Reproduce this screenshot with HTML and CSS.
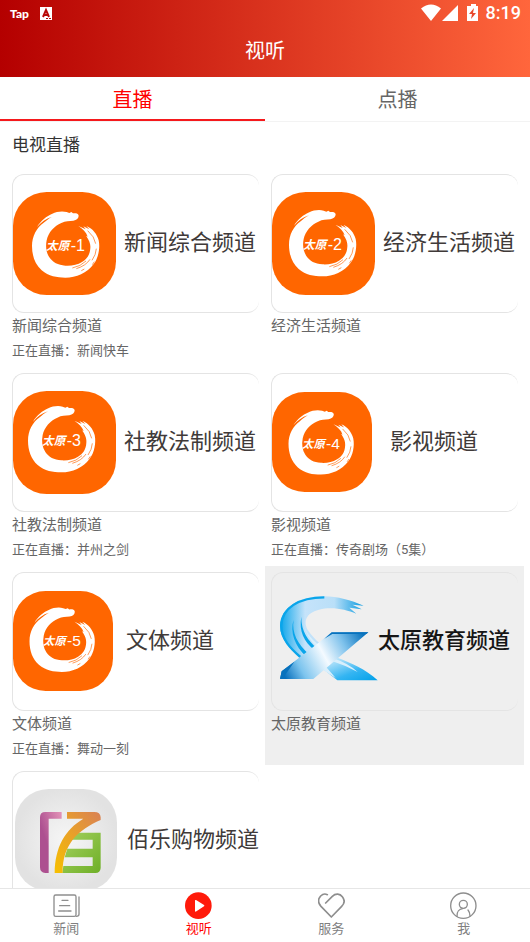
FILE: index.html
```html
<!DOCTYPE html>
<html lang="zh-CN">
<head>
    <meta charset="UTF-8">
    <meta name="viewport" content="width=device-width, initial-scale=1.0">
    <title>视听</title>
    <link rel="stylesheet" href="styles.css">
</head>
<body>
    <!-- Shared brush ring of the Taiyuan channels -->
    <svg class="defs" width="0" height="0" aria-hidden="true">
        <defs>
            <symbol id="ring" viewBox="0 0 309 309">
                <path fill="#fff" d="M197 71C196 64 188 63 180 64L175 60L169 63L161 60C147 56 130 59 118 65C101 72 83 86 72 105C84 91 99 79 117 74C106 80 98 87 92 92C71 107 57 132 57 162C57 191 66 217 86 235C107 253 132 257 157 257C190 257 222 243 242 216C256 199 262 168 257 145C252 127 240 110 220 102L229 112L211 103L218 112L196 102C209 111 220 121 224 134L219 131C230 146 233 158 232 168C231 188 222 201 207 210C193 219 176 222 157 221C135 220 119 211 109 196C100 182 97 165 101 145C106 121 124 102 145 93C158 86 169 88 181 86C191 84 197 79 197 71Z"/>
                <path fill="none" stroke="#ff6600" stroke-width="2" d="M178 228Q203 223 219 207M190 230Q219 221 231 202M237 205Q249 188 250 170M224 116Q245 134 248 155M205 236L214 231M238 218L244 209"/>
                <text class="ring-name" x="99" y="174">太原</text>
            </symbol>
        </defs>
    </svg>

    <header class="header">
        <div class="status">
            <span class="status-tap">Tap</span>
            <svg class="status-a" viewBox="0 0 12 13" width="12" height="13" aria-hidden="true">
                <path fill="#fff" d="M0 0h12v13H0z"/>
                <path fill="none" stroke="#b80a08" stroke-width="2" d="M3 10L6 3L9 10M4 8h4"/>
                <path fill="#b80a08" d="M6 11h2v1H6zM9 11h2v1H9z"/>
            </svg>
            <div class="status-right">
                <svg viewBox="0 0 58 18" width="58" height="18" aria-hidden="true">
                    <path fill="#fff" d="M0 4.500Q10-3.500 20 4.500L10 17zM37 1v16H21zM47 2h3V0h5v2h2v15H46V2z"/>
                    <path fill="#e8492d" d="M53 4l-5 6h3l-1 5 5-6h-3z"/>
                </svg>
                <span class="clock">8:19</span>
            </div>
        </div>
        <h1 class="title">视听</h1>
    </header>

    <nav class="tabs">
        <button class="tab active" type="button">直播</button>
        <button class="tab" type="button">点播</button>
    </nav>

    <main class="content">
        <h2 class="section-title">电视直播</h2>
        <div class="channels">
            <a class="channel" href="#">
                <div class="banner">
                    <svg class="logo" viewBox="0 0 309 309" aria-hidden="true">
                        <rect width="309" height="309" rx="101" fill="#ff6600"/>
                        <use href="#ring" width="309" height="309"/>
                        <text class="ring-number" x="173" y="178">-1</text>
                    </svg>
                    <span class="banner-text">新闻综合频道</span>
                </div>
                <h3 class="name">新闻综合频道</h3>
                <p class="playing">正在直播：新闻快车</p>
            </a>
            <a class="channel" href="#">
                <div class="banner">
                    <svg class="logo" viewBox="0 0 309 309" aria-hidden="true">
                        <rect width="309" height="309" rx="101" fill="#ff6600"/>
                        <use href="#ring" x="-6" y="-4" width="309" height="309"/>
                        <text class="ring-number" x="167" y="174">-2</text>
                    </svg>
                    <span class="banner-text">经济生活频道</span>
                </div>
                <h3 class="name">经济生活频道</h3>
            </a>
            <a class="channel" href="#">
                <div class="banner">
                    <svg class="logo" viewBox="0 0 309 309" aria-hidden="true">
                        <rect width="309" height="309" rx="101" fill="#ff6600"/>
                        <use href="#ring" x="-12" y="-13" width="309" height="309"/>
                        <text class="ring-number" x="161" y="165">-3</text>
                    </svg>
                    <span class="banner-text">社教法制频道</span>
                </div>
                <h3 class="name">社教法制频道</h3>
                <p class="playing">正在直播：并州之剑</p>
            </a>
            <a class="channel" href="#">
                <div class="banner banner-movie">
                    <svg class="logo" viewBox="0 0 309 309" aria-hidden="true">
                        <rect width="309" height="309" rx="101" fill="#ff6600"/>
                        <use href="#ring" x="-6" y="-2" width="309" height="309"/>
                        <text class="ring-number" x="167" y="176">-4</text>
                    </svg>
                    <span class="banner-text">影视频道</span>
                </div>
                <h3 class="name">影视频道</h3>
                <p class="playing">正在直播：传奇剧场（5集）</p>
            </a>
            <a class="channel" href="#">
                <div class="banner banner-sport">
                    <svg class="logo" viewBox="0 0 309 309" aria-hidden="true">
                        <rect width="309" height="309" rx="101" fill="#ff6600"/>
                        <use href="#ring" x="-6" y="-7" width="309" height="309"/>
                        <text class="ring-number" x="167" y="171">-5</text>
                    </svg>
                    <span class="banner-text">文体频道</span>
                </div>
                <h3 class="name">文体频道</h3>
                <p class="playing">正在直播：舞动一刻</p>
            </a>
            <a class="channel pressed" href="#">
                <div class="banner banner-edu">
                    <svg class="logo" viewBox="45 80 294 294" aria-hidden="true">
                        <defs>
                            <linearGradient id="eduArc" x1="0" y1="0" x2="1" y2="0">
                                <stop offset="0" stop-color="#0aa5ea"/>
                                <stop offset="0.300" stop-color="#c5e3fa"/>
                                <stop offset="0.650" stop-color="#b9dff8"/>
                                <stop offset="1" stop-color="#0a9ae0"/>
                            </linearGradient>
                            <linearGradient id="eduBar" gradientUnits="userSpaceOnUse" x1="60" y1="335" x2="295" y2="205">
                                <stop offset="0" stop-color="#0870bd"/>
                                <stop offset="0.200" stop-color="#7cc4ee"/>
                                <stop offset="0.500" stop-color="#f4faff"/>
                                <stop offset="0.750" stop-color="#7fc2ec"/>
                                <stop offset="1" stop-color="#0872bd"/>
                            </linearGradient>
                            <linearGradient id="eduLeg" x1="0" y1="0" x2="1" y2="1">
                                <stop offset="0" stop-color="#e6f4fd"/>
                                <stop offset="0.600" stop-color="#35b5f2"/>
                                <stop offset="1" stop-color="#00a0e9"/>
                            </linearGradient>
                        </defs>
                        <path fill="url(#eduArc)" d="M105 277C78 253 45 222 45 181C46 125 107 91 178 93C218 93 257 105 296 121L262 118L290 132L253 127L274 145C242 133 203 123 162 133C122 143 113 170 131 198C139 210 151 223 164 234L127 275Z"/>
                        <path fill="none" stroke="#0aa5ea" stroke-width="7" d="M106 275C77 250 48 220 49 181C50 128 102 96 178 96"/>
                        <path fill="#0aa5ea" d="M86 163C79 203 99 236 130 265L124 274C89 242 74 199 86 163zM109 154C108 199 130 226 156 249L149 254C117 230 101 197 109 154z"/>
                        <path fill="#d9effc" d="M114 171Q120 209 164 241L157 247Q126 220 114 171z"/>
                        <path fill="url(#eduLeg)" d="M218 277C258 293 301 310 338 345H217L171 309Z"/>
                        <path fill="#d9effc" d="M211 281Q250 294 278 320Q240 300 203 288zM179 300L212 338L169 310z"/>
                        <path fill="url(#eduBar)" d="M200 201H310L145 341H45L50 318L155 237Z"/>
                        <path fill="#0872bd" d="M200 201H310L304 206H202L178 220zM45 341L50 318L88 289L60 330Z"/>
                    </svg>
                    <span class="banner-text">太原教育频道</span>
                </div>
                <h3 class="name">太原教育频道</h3>
            </a>
            <a class="channel" href="#">
                <div class="banner banner-shop">
                    <svg class="logo" viewBox="45 78 306 306" aria-hidden="true">
                        <defs>
                            <radialGradient id="shopBg">
                                <stop offset="0" stop-color="#f6f6f6"/>
                                <stop offset="1" stop-color="#e2e2e2"/>
                            </radialGradient>
                            <linearGradient id="shopPink" x1="0" y1="1" x2="1" y2="0">
                                <stop offset="0.400" stop-color="#ad5090"/>
                                <stop offset="1" stop-color="#e493b8"/>
                            </linearGradient>
                            <linearGradient id="shopGold" x1="0" y1="1" x2="1" y2="0">
                                <stop offset="0" stop-color="#f7c000"/>
                                <stop offset="0.500" stop-color="#e9a128"/>
                                <stop offset="1" stop-color="#d98155"/>
                            </linearGradient>
                            <linearGradient id="shopGreen" x1="0" y1="0" x2="1" y2="1">
                                <stop offset="0" stop-color="#a5d160"/>
                                <stop offset="1" stop-color="#6eaf27"/>
                            </linearGradient>
                        </defs>
                        <rect x="45" y="78" width="306" height="306" rx="101" fill="url(#shopBg)"/>
                        <path fill="url(#shopPink)" d="M185 147V167H146V330H136Q120 329 120 313V163Q120 147 136 147Z"/>
                        <path fill="url(#shopGreen)" fill-rule="evenodd" d="M219 209H302V315Q301 330 286 330H187L190 309H278V283H194L202 257H278V230H208Z"/>
                        <path fill="url(#shopGold)" d="M201 147H283Q301 147 302 163V171C236 200 187 242 188 330H164C165 252 195 200 250 167H201Z"/>
                    </svg>
                    <span class="banner-text">佰乐购物频道</span>
                </div>
            </a>
        </div>
    </main>

    <nav class="bottom-nav">
        <a class="nav-item" href="#">
            <svg viewBox="0 0 81 81" aria-hidden="true">
                <g fill="none" stroke="#8e8e8e" stroke-width="4" stroke-linecap="round">
                    <rect x="3" y="9" width="66" height="64" rx="5"/>
                    <path d="M78 15V67Q78 73 70 73M27 25H45M20 41H50M17 57H54"/>
                </g>
            </svg>
            <span>新闻</span>
        </a>
        <a class="nav-item active" href="#">
            <svg viewBox="0 0 81 81" aria-hidden="true">
                <circle cx="40" cy="41" r="40" fill="#ff1a0a"/>
                <path fill="#fff" stroke="#fff" stroke-width="4" stroke-linejoin="round" d="M32 26V57L56 41Z"/>
            </svg>
            <span>视听</span>
        </a>
        <a class="nav-item" href="#">
            <svg viewBox="0 0 81 81" aria-hidden="true">
                <path fill="none" stroke="#8e8e8e" stroke-width="5" stroke-linecap="round" stroke-linejoin="round" d="M23 33L43 13C53 3 66 5 73 14C81 24 79 35 71 43L40 75L9 43C-1 32 1 20 8 12C14 6 22 5 28 8"/>
            </svg>
            <span>服务</span>
        </a>
        <a class="nav-item" href="#">
            <svg viewBox="0 0 81 81" aria-hidden="true">
                <g fill="none" stroke="#8e8e8e" stroke-width="4" stroke-linecap="round">
                    <circle cx="40" cy="41" r="38"/>
                    <circle cx="40" cy="37" r="12"/>
                    <path d="M21 73C20 59 28 51 38 50M54 54Q60 61 60 72"/>
                </g>
            </svg>
            <span>我</span>
        </a>
    </nav>
</body>
</html>
```

FILE: styles.css
```css
* {
    box-sizing: border-box;
}
body {
    font-family: Roboto, "Noto Sans CJK SC", sans-serif;
    margin: 0;
    background-color: #ffffff;
    color: #666666;
    display: flex;
    flex-direction: column;
    height: 100vh;
}
h1, h2, h3, p {
    margin: 0;
    font-weight: normal;
}
a {
    color: inherit;
    text-decoration: none;
}
.defs {
    position: absolute;
}
.header {
    background: linear-gradient(to right, #b40000, #ff663c);
    color: #ffffff;
    flex: none;
}
.status {
    display: flex;
    align-items: center;
    height: 26px;
    padding: 0 9px 0 10px;
}
.status-tap {
    font-family: Lato, sans-serif;
    font-size: 12px;
    font-weight: 900;
    margin-right: 11px;
}
.status-right {
    display: flex;
    align-items: center;
    gap: 7px;
    margin-left: auto;
}
.clock {
    font-size: 18px;
    font-weight: 500;
    line-height: 26px;
}
.title {
    font-size: 20px;
    line-height: 51px;
    text-align: center;
}
.tabs {
    display: flex;
    flex: none;
    border-bottom: 1px solid #f3f3f3;
}
.tab {
    flex: 1;
    height: 44px;
    padding: 0;
    border: none;
    border-bottom: 2px solid transparent;
    background: none;
    color: #666666;
    font-family: inherit;
    font-size: 20px;
    cursor: pointer;
}
.tab.active {
    color: #ff0000;
    border-bottom-color: #f5191c;
}
.content {
    flex: 1;
    min-height: 0;
    overflow-y: auto;
    scrollbar-width: none;
}
.section-title {
    padding-left: 12px;
    color: #333333;
    font-size: 17px;
    line-height: 46px;
}
.channels {
    display: grid;
    grid-template-columns: 1fr 1fr;
    padding: 0 6px;
}
.channel {
    display: block;
    min-width: 0;
    padding: 6px 6px 5px;
}
.channel.pressed {
    background-color: #efefef;
}
.banner {
    display: flex;
    align-items: center;
    gap: 8px;
    aspect-ratio: 16 / 9;
    border: 1px solid #e4e4e4;
    border-right: none;
    border-radius: 12px;
    overflow: hidden;
}
.logo {
    flex: none;
    width: 103px;
}
.banner-text {
    color: #403a39;
    font-size: 22px;
    line-height: 32px;
    white-space: nowrap;
}
.banner-movie {
    gap: 18px;
}
.banner-sport {
    gap: 13px;
}
.banner-movie .logo,
.banner-sport .logo {
    width: 100px;
}
.banner-edu {
    gap: 0;
    padding-left: 8px;
}
.banner-edu .logo {
    width: 98px;
}
.banner-edu .banner-text {
    color: #161616;
    font-weight: 500;
}
.banner-shop {
    gap: 10px;
    padding-left: 2px;
}
.banner-shop .logo {
    width: 102px;
}
.ring-name {
    fill: #ffffff;
    font-family: "Noto Sans CJK SC", sans-serif;
    font-size: 35px;
    font-style: italic;
    font-weight: 700;
}
.ring-number {
    fill: #ffffff;
    font-family: "Liberation Sans", sans-serif;
    font-size: 48px;
}
.name {
    font-size: 15px;
    line-height: 27px;
}
.playing {
    font-size: 13px;
    line-height: 22px;
}
.bottom-nav {
    display: flex;
    flex: none;
    border-top: 1px solid #e6e6e6;
    background-color: #ffffff;
}
.nav-item {
    flex: 1;
    display: flex;
    flex-direction: column;
    align-items: center;
    padding: 3px 0;
    color: #808080;
    font-size: 13px;
    line-height: 20px;
}
.nav-item svg {
    width: 27px;
    height: 27px;
}
.nav-item.active {
    color: #ff0000;
}
```
